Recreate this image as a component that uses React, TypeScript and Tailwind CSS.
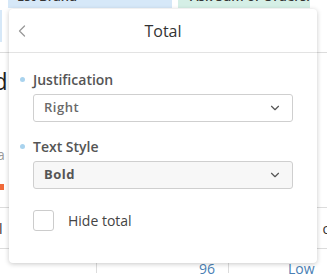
import { ChevronDown, ChevronLeft } from "lucide-react";

const Field = ({ label, value, filled }: { label: string; value: string; filled?: boolean }) => (
  <div className="flex flex-col">
    <div className="flex items-center h-[20px] -ml-[13px]">
      <span className="w-[5px] h-[5px] rounded-full bg-[#a9d3ee] mr-[8px]" />
      <span className="text-[14px] font-semibold text-[#555]">{label}</span>
    </div>
    <div
      className={`mt-[5px] h-[28px] rounded-[3px] border border-[#cfcfcf] flex items-center justify-between pl-[10px] pr-[10px] ${
        filled ? "bg-[#f7f7f7] font-bold text-[#555]" : "bg-white font-semibold text-[#6a6a6a]"
      }`}
    >
      <span className="text-[13px] tracking-[0.5px]">{value}</span>
      <ChevronDown size={14} strokeWidth={2} className="text-[#555]" />
    </div>
  </div>
);

export default function App() {
  return (
    <div className="relative w-[327px] h-[274px] overflow-hidden bg-white font-['Open_Sans',sans-serif]">
      {/* background table */}
      <div className="flex h-[8px] overflow-hidden">
        <div className="w-[8px]" />
        <div className="w-[164px] bg-[#d6e8f8] pl-[9px] overflow-hidden">
          <div className="-mt-[10px] text-[13px] leading-[13px] font-semibold text-[#333]">Est Brand</div>
        </div>
        <div className="w-[6px]" />
        <div className="w-[132px] bg-[#d5efe6] pl-[12px] overflow-hidden">
          <div className="-mt-[10px] text-[13px] leading-[13px] font-semibold text-[#333] whitespace-nowrap">Ask Sum of Orders...</div>
        </div>
      </div>
      <div className="flex h-[45px] border-b border-[#dcdcdc]">
        <div className="w-[2px] mt-[2px] h-[32px] bg-[#d6e8f8]" />
      </div>
      <div className="flex flex-col h-[155px] border-b border-[#dcdcdc]">
        <div className="mt-[14px] text-[24px] leading-[28px] text-[#222] -ml-[7px]">d</div>
        <div className="mt-[52px] text-[14px] leading-[16px] text-[#999] -ml-[3px]">a</div>
        <div className="mt-[21px] w-[4px] h-[6px] bg-[#f06a3a]" />
      </div>
      <div className="flex items-center justify-between h-[41px] border-b border-[#dcdcdc]">
        <span className="text-[14px] text-[#333] -ml-[1px]">l</span>
        <span className="text-[14px] text-[#333] -mr-[4px]">o</span>
      </div>
      <div className="flex h-[24px] text-[14px] text-[#4a7fb5]">
        <div className="w-[97px] border-r border-[#dcdcdc]" />
        <div className="w-[132px] border-r border-[#dcdcdc] flex justify-end pr-[13px] pt-[12px] leading-[16px]">96</div>
        <div className="flex-1 pl-[59px] pt-[12px] leading-[16px]">Low</div>
      </div>

      {/* popover */}
      <div className="absolute left-[9px] top-[9px] w-[308px] h-[254px] bg-white rounded-[4px] shadow-[0_1px_5px_rgba(0,0,0,0.22)] flex flex-col">
        <div className="relative h-[44px] border-b border-[#e3e3e3] flex items-center justify-center">
          <ChevronLeft size={20} strokeWidth={1.5} className="absolute left-[3px] text-[#999]" />
          <span className="text-[16px] text-[#333]">Total</span>
        </div>
        <div className="flex flex-col px-[24px] pt-[16px]">
          <Field label="Justification" value="Right" />
          <div className="h-[14px]" />
          <Field label="Text Style" value="Bold" filled />
          <div className="mt-[21px] flex items-center">
            <span className="w-[21px] h-[21px] rounded-[3px] border border-[#cccccc]" />
            <span className="ml-[14px] text-[14px] text-[#444]">Hide total</span>
          </div>
        </div>
      </div>
    </div>
  );
}
